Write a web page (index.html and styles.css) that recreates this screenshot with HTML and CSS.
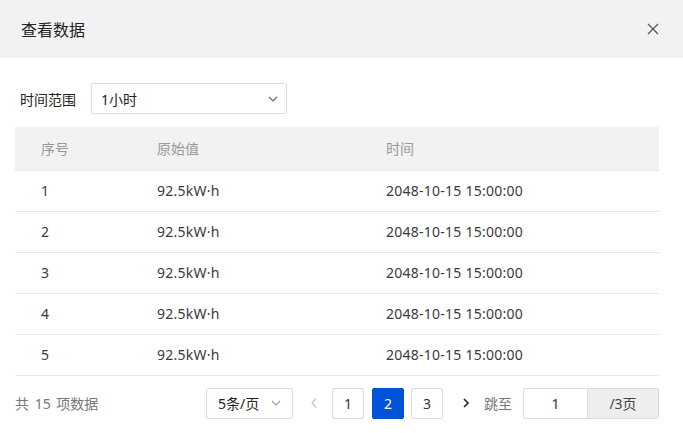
FILE: index.html
```html
<!DOCTYPE html>
<html lang="zh">
<head>
<meta charset="utf-8">
<link rel="stylesheet" href="styles.css">
</head>
<body>
<div class="dialog">
  <div class="dialog-header">
    <span class="dialog-title">查看数据</span>
    <svg class="close" width="12" height="12" viewBox="0 0 12 12"><path d="M1 1L11 11M11 1L1 11" stroke="#555" stroke-width="1.3" fill="none"/></svg>
  </div>
  <div class="dialog-body">
    <div class="filter">
      <span class="filter-label">时间范围</span>
      <div class="select wide">
        <span>1小时</span>
        <svg class="chev" width="10" height="6" viewBox="0 0 10 6"><path d="M1 1L5 5L9 1" stroke="#666" stroke-width="1.2" fill="none"/></svg>
      </div>
    </div>
    <table class="table">
      <thead>
        <tr><th class="c1">序号</th><th class="c2">原始值</th><th>时间</th></tr>
      </thead>
      <tbody>
        <tr><td>1</td><td>92.5kW·h</td><td>2048-10-15 15:00:00</td></tr>
        <tr><td>2</td><td>92.5kW·h</td><td>2048-10-15 15:00:00</td></tr>
        <tr><td>3</td><td>92.5kW·h</td><td>2048-10-15 15:00:00</td></tr>
        <tr><td>4</td><td>92.5kW·h</td><td>2048-10-15 15:00:00</td></tr>
        <tr><td>5</td><td>92.5kW·h</td><td>2048-10-15 15:00:00</td></tr>
      </tbody>
    </table>
    <div class="pager">
      <span class="total">共 15 项数据</span>
      <div class="pager-right">
        <div class="select size">
          <span>5条/页</span>
          <svg class="chev" width="10" height="6" viewBox="0 0 10 6"><path d="M1 1L5 5L9 1" stroke="#999" stroke-width="1.1" fill="none"/></svg>
        </div>
        <span class="arrow prev"><svg width="8" height="12" viewBox="0 0 8 12"><path d="M6 1.5L2 6L6 10.5" stroke="#c5c5c5" stroke-width="1.3" fill="none"/></svg></span>
        <span class="page p1">1</span>
        <span class="page active">2</span>
        <span class="page p3">3</span>
        <span class="arrow next"><svg width="8" height="12" viewBox="0 0 8 12"><path d="M2 2L6 6L2 10" stroke="#222" stroke-width="1.6" fill="none"/></svg></span>
        <span class="jump">跳至</span>
        <div class="jump-input">
          <span class="jump-value">1</span>
          <span class="jump-addon">/3页</span>
        </div>
      </div>
    </div>
  </div>
</div>
</body>
</html>
```
FILE: styles.css
```css
* { box-sizing: border-box; }
body {
  margin: 0;
  background: #fff;
  font-family: "Noto Sans", "Noto Sans CJK SC", sans-serif;
  font-size: 14px;
  color: #333;
}
.dialog { width: 683px; }
.dialog-header {
  height: 58px;
  background: #f2f2f2;
  display: flex;
  align-items: center;
  justify-content: space-between;
  padding: 0 24px 0 21px;
}
.dialog-title { font-size: 16px; color: #222; }
.close { display: block; }
.dialog-body { padding: 25px 24px 0 15px; }
.filter {
  display: flex;
  align-items: center;
  padding-left: 5px;
}
.filter-label { width: 71px; color: #222; }
.select {
  border: 1px solid #dcdcdc;
  border-radius: 2px;
  height: 31px;
  display: flex;
  align-items: center;
  justify-content: space-between;
  padding: 0 8px 0 9px;
  color: #222;
}
.select.wide { width: 196px; }
.chev { display: block; }
.table {
  margin-top: 13px;
  width: 644px;
  border-collapse: collapse;
}
.table th {
  background: #f2f2f2;
  font-weight: normal;
  color: #999;
  text-align: left;
  height: 43px;
  padding: 0 0 0 26px;
  border-bottom: 1px solid #e7e7e7;
}
.table th.c1, .table td:first-child { width: 116px; }
.table th.c2, .table td:nth-child(2) { width: 229px; }
.table td {
  height: 41px;
  padding: 0 0 0 26px;
  border-bottom: 1px solid #e7e7e7;
  color: #3a3a3a;
  letter-spacing: 0.25px;
}
.pager {
  margin-top: 12px;
  display: flex;
  align-items: center;
  justify-content: space-between;
  width: 644px;
}
.total { color: #777; word-spacing: 2px; }
.pager-right { display: flex; align-items: center; }
.select.size { width: 87px; padding: 0 11px 0 11px; }
.arrow {
  width: 32px;
  height: 31px;
  display: flex;
  align-items: center;
  justify-content: center;
}
.prev { margin-left: 5px; }
.next { margin-left: 7px; }
.page {
  width: 32px;
  height: 31px;
  border: 1px solid #dcdcdc;
  border-radius: 2px;
  display: flex;
  align-items: center;
  justify-content: center;
  color: #333;
  margin-left: 8px;
}
.page.p1 { margin-left: 2px; }
.page.p3 { margin-left: 7px; }
.page.active {
  background: #0052d9;
  border-color: #0052d9;
  color: #fff;
}
.jump { margin-left: 2px; color: #777; }
.jump-input {
  margin-left: 11px;
  display: flex;
  height: 31px;
  border: 1px solid #dcdcdc;
  border-radius: 2px;
  overflow: hidden;
}
.jump-value {
  width: 63px;
  display: flex;
  align-items: center;
  justify-content: center;
  color: #333;
}
.jump-addon {
  width: 71px;
  background: #eeeeee;
  border-left: 1px solid #dcdcdc;
  display: flex;
  align-items: center;
  justify-content: center;
  color: #444;
}
```
